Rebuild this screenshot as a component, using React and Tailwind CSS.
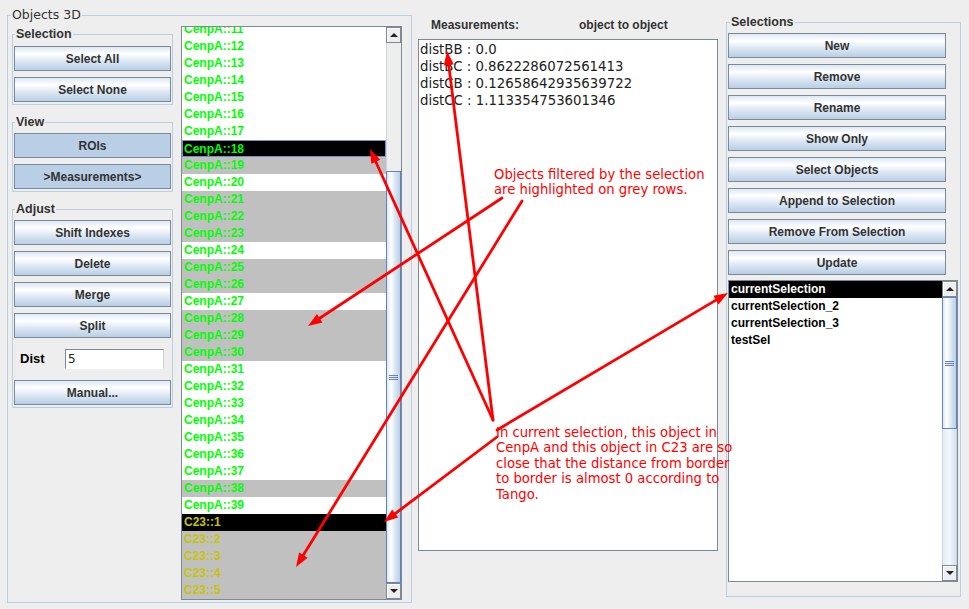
import React from "react";

const GRAD =
  "bg-[linear-gradient(to_bottom,#dde8f3_0%,#ffffff_30%,#dde8f3_60%,#b8cfe5_100%)]";

function Btn({ children, flat = false, className = "" }) {
  return (
    <div
      className={`h-[25px] shrink-0 flex items-center justify-center border border-[#7a8a99] text-[12px] font-bold text-[#333333] leading-none ${
        flat ? "bg-[#b8cfe5]" : GRAD
      } ${className}`}
    >
      {children}
    </div>
  );
}

function Titled({ title, className = "", legendClass = "", bodyClass = "", children }) {
  return (
    <fieldset className={`min-w-0 border border-[#b8cfe5] ${className}`}>
      <legend className={`px-[1px] text-[#333333] ${legendClass}`}>{title}</legend>
      <div className={bodyClass}>{children}</div>
    </fieldset>
  );
}

function ArrowBtn({ up }) {
  return (
    <div className="h-[16px] shrink-0 flex items-center justify-center border border-[#7a8a99] bg-[#eeeeee] shadow-[inset_1px_1px_0_#ffffff]">
      <div
        className={
          up
            ? "w-0 h-0 border-x-[4px] border-x-transparent border-b-[4px] border-b-[#222222]"
            : "w-0 h-0 border-x-[4px] border-x-transparent border-t-[4px] border-t-[#222222]"
        }
      />
    </div>
  );
}

function Thumb({ className = "" }) {
  return (
    <div
      className={`border border-[#6382bf] bg-[linear-gradient(to_right,#dde8f3_0%,#ffffff_30%,#dde8f3_60%,#b8cfe5_100%)] flex items-center justify-center ${className}`}
    >
      <div className="flex flex-col gap-[1px] w-[9px]">
        <div className="h-[1px] bg-[#6382bf]" />
        <div className="h-[1px] bg-[#6382bf]" />
        <div className="h-[1px] bg-[#6382bf]" />
      </div>
    </div>
  );
}

const SANS = "font-['Liberation_Sans',Arial,sans-serif]";
const DJ = "font-['DejaVu_Sans',sans-serif]";

function head(fx, fy, tx, ty, len = 14, w = 5) {
  const dx = tx - fx;
  const dy = ty - fy;
  const L = Math.hypot(dx, dy);
  const ux = dx / L;
  const uy = dy / L;
  const bx = tx - ux * len;
  const by = ty - uy * len;
  const px = -uy;
  const py = ux;
  return {
    base: [bx, by],
    pts: `${tx},${ty} ${bx + px * w},${by + py * w} ${bx - px * w},${by - py * w}`,
  };
}

export default function App() {
  const cenpGrey = new Set([19, 21, 22, 23, 25, 26, 28, 29, 30, 38]);
  const rows = [];
  for (let n = 11; n <= 39; n++)
    rows.push({ label: `CenpA::${n}`, yellow: false, sel: n === 18, focus: n === 18, grey: cenpGrey.has(n) });
  for (let n = 1; n <= 5; n++)
    rows.push({ label: `C23::${n}`, yellow: true, sel: n === 1, focus: false, grey: n > 1 });

  const arrows = [
    [493, 420, 447, 51],
    [493, 420, 370, 149],
    [497, 430, 728, 293],
    [497, 437, 384, 522],
    [502, 198, 308, 326],
    [522, 201, 296, 567],
  ];

  const rightBtns = [
    "New",
    "Remove",
    "Rename",
    "Show Only",
    "Select Objects",
    "Append to Selection",
    "Remove From Selection",
    "Update",
  ];

  const sels = ["currentSelection", "currentSelection_2", "currentSelection_3", "testSel"];

  return (
    <div className={`relative w-[969px] h-[609px] bg-[#eeeeee] overflow-hidden flex items-start ${SANS}`}>
      {/* Objects 3D */}
      <Titled
        title="Objects 3D"
        className="ml-[7px] mt-[7px] w-[405px] shrink-0"
        legendClass={`ml-[3px] text-[12.5px] leading-[16px] ${DJ}`}
        bodyClass="flex items-start pb-[2px]"
      >
        <div className="ml-[4px] mt-[4px] w-[161px] shrink-0 flex flex-col">
          <Titled
            title="Selection"
            legendClass="ml-[2px] text-[12.5px] font-bold leading-[14px]"
            bodyClass="flex flex-col gap-[6px] px-[1px] pt-[5px] pb-[2px]"
          >
            <Btn>Select All</Btn>
            <Btn>Select None</Btn>
          </Titled>
          <Titled
            title="View"
            className="mt-[10px]"
            legendClass="ml-[2px] text-[12.5px] font-bold leading-[14px]"
            bodyClass="flex flex-col gap-[6px] px-[1px] pt-[4px] pb-[2px]"
          >
            <Btn flat>ROIs</Btn>
            <Btn flat>&gt;Measurements&gt;</Btn>
          </Titled>
          <Titled
            title="Adjust"
            className="mt-[10px]"
            legendClass="ml-[2px] text-[12.5px] font-bold leading-[14px]"
            bodyClass="flex flex-col px-[1px] pt-[4px] pb-[2px]"
          >
            <div className="flex flex-col gap-[6px]">
              <Btn>Shift Indexes</Btn>
              <Btn>Delete</Btn>
              <Btn>Merge</Btn>
              <Btn>Split</Btn>
            </div>
            <div className="mt-[11px] h-[20px] flex items-center">
              <div className="ml-[6px] w-[45px] text-[13px] font-bold text-black">Dist</div>
              <div
                className={`w-[99px] h-[20px] bg-white border border-t-[#7a8a99] border-l-[#7a8a99] border-b-[#ffffff] border-r-[#d0d0d0] flex items-center pl-[2px] text-[12px] text-[#222222] ${DJ}`}
              >
                5
              </div>
            </div>
            <Btn className="mt-[11px]">Manual...</Btn>
          </Titled>
        </div>

        {/* object list */}
        <div className="ml-[8px] mt-[3px] w-[221px] h-[574px] shrink-0 border border-[#7a8a99] flex">
          <div className="w-[204px] h-[572px] overflow-hidden bg-white">
            <div className="-mt-[6px] flex flex-col">
              {rows.map((r) => (
                <div
                  key={r.label}
                  className={`h-[17px] shrink-0 leading-[17px] text-[12px] font-bold whitespace-nowrap ${
                    r.sel ? "bg-black" : r.grey ? "bg-[#c0c0c0]" : "bg-white"
                  } ${r.yellow ? "text-[#c8c400]" : "text-[#00ff00]"} ${
                    r.focus ? "border border-[#7b8fc2] pl-[1px] leading-[15px]" : "pl-[2px]"
                  }`}
                >
                  {r.label}
                </div>
              ))}
            </div>
          </div>
          <div className="w-[15px] h-[572px] flex flex-col bg-[#eeeeee]">
            <ArrowBtn up />
            <div className="h-[128px] shrink-0 border-l border-[#c8d6e6]" />
            <Thumb className="h-[412px] shrink-0" />
            <ArrowBtn />
          </div>
        </div>
      </Titled>

      {/* Measurements */}
      <div className="w-[314px] shrink-0 flex flex-col">
        <div className="mt-[17px] h-[16px] leading-[16px] flex text-[12px] font-bold text-[#333333]">
          <div className="ml-[19px] w-[148px]">Measurements:</div>
          <div>object to object</div>
        </div>
        <div
          className={`ml-[6px] mt-[6px] w-[300px] h-[512px] bg-white border border-[#7a8a99] pl-[1px] pt-[1px] text-[13.3px] leading-[17px] text-[#222222] ${DJ}`}
        >
          <div>distBB : 0.0</div>
          <div>distBC : 0.8622286072561413</div>
          <div>distCB : 0.12658642935639722</div>
          <div>distCC : 1.113354753601346</div>
        </div>
      </div>

      {/* Selections */}
      <Titled
        title="Selections"
        className="mt-[15px] w-[235px] shrink-0"
        legendClass="ml-[3px] text-[12.5px] font-bold leading-[14px]"
        bodyClass="flex flex-col pl-[1px] pt-[4px] pb-[14px]"
      >
        <div className="w-[218px] flex flex-col gap-[6px]">
          {rightBtns.map((b) => (
            <Btn key={b}>{b}</Btn>
          ))}
        </div>
        <div className="mt-[5px] w-[230px] h-[302px] border border-[#7a8a99] flex">
          <div className="w-[213px] h-[300px] bg-white flex flex-col">
            {sels.map((s, i) => (
              <div
                key={s}
                className={`h-[17px] leading-[17px] pl-[2px] text-[12px] font-bold ${
                  i === 0 ? "bg-black text-white" : "text-black"
                }`}
              >
                {s}
              </div>
            ))}
          </div>
          <div className="w-[15px] h-[300px] flex flex-col bg-[#eeeeee]">
            <ArrowBtn up />
            <Thumb className="h-[132px] shrink-0" />
            <div className="flex-1 border-x border-[#c8d6e6] bg-[linear-gradient(to_right,#e4ecf5,#f4f7fb,#d5e1ee)]" />
            <ArrowBtn />
          </div>
        </div>
      </Titled>

      {/* annotations */}
      <div
        className={`absolute left-[494px] top-[167px] text-[13.2px] leading-[15px] text-[#ff0000] whitespace-nowrap ${DJ}`}
      >
        Objects filtered by the selection
        <br />
        are highlighted on grey rows.
      </div>
      <div
        className={`absolute left-[496px] top-[425px] text-[13.2px] leading-[15.4px] text-[#ff0000] whitespace-nowrap ${DJ}`}
      >
        In current selection, this object in
        <br />
        CenpA and this object in C23 are so
        <br />
        close that the distance from border
        <br />
        to border is almost 0 according to
        <br />
        Tango.
      </div>

      <svg
        className="absolute left-0 top-0 pointer-events-none"
        width="969"
        height="609"
        viewBox="0 0 969 609"
      >
        {arrows.map(([fx, fy, tx, ty], i) => {
          const h = head(fx, fy, tx, ty);
          return (
            <g key={i}>
              <line
                x1={fx}
                y1={fy}
                x2={h.base[0]}
                y2={h.base[1]}
                stroke="#ff0000"
                strokeWidth="2.8"
                strokeLinecap="round"
              />
              <polygon points={h.pts} fill="#ff0000" />
            </g>
          );
        })}
      </svg>
    </div>
  );
}
